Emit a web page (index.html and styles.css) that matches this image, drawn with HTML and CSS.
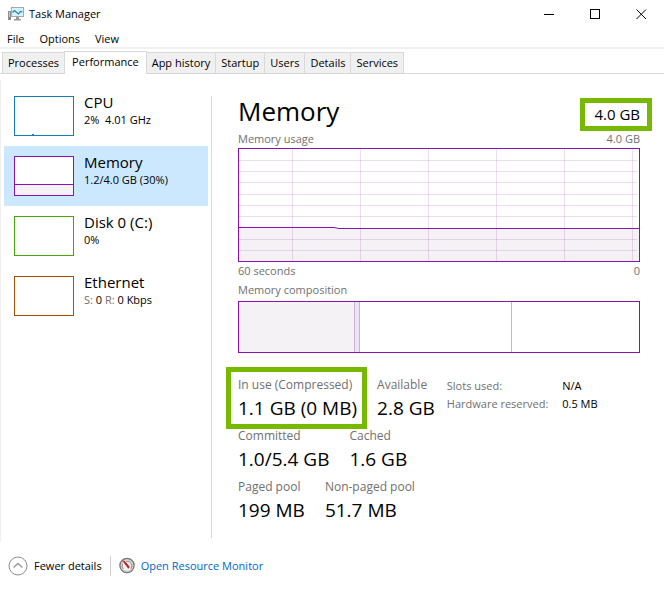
FILE: index.html
```html
<!DOCTYPE html>
<html lang="en">

<head>
    <meta charset="UTF-8">
    <meta name="viewport" content="width=device-width, initial-scale=1.0">
    <title>Task Manager</title>
    <link rel="stylesheet" href="styles.css">
</head>

<body>
    <header class="titlebar">
        <svg class="app-icon" width="16" height="16" viewBox="0 0 16 16" aria-hidden="true">
            <rect x="0.5" y="5.5" width="2" height="8" fill="#c8c8c8" stroke="#8f8f8f" />
            <rect x="1" y="11" width="1" height="2" fill="#5aa05a" />
            <rect x="3.5" y="1.5" width="12" height="9" fill="#d8f2fb" stroke="#a5a9ac" />
            <path d="M4.5 6.5 L6.5 4.500 L10.5 8 L12.5 5.500 L14.5 6" fill="none" stroke="#1286b8" stroke-width="1.2" />
            <path d="M8 11h3v2h2v1.500H6V13h2z" fill="#9a9a9a" />
        </svg>
        <h1 class="title">Task Manager</h1>
        <div class="window-buttons">
            <button type="button" aria-label="Minimize">
                <svg width="12" height="11" viewBox="0 0 12 11"><path d="M1 5.500h10" /></svg>
            </button>
            <button type="button" aria-label="Maximize">
                <svg width="11" height="11" viewBox="0 0 11 11"><path d="M0.500 0.500h9v9h-9z" /></svg>
            </button>
            <button type="button" aria-label="Close">
                <svg width="11" height="11" viewBox="0 0 11 11"><path class="smooth" d="M0.500 0.500l9.500 9.500M10 0.500l-9.500 9.500" /></svg>
            </button>
        </div>
    </header>

    <nav class="menu">
        <button type="button">File</button>
        <button type="button">Options</button>
        <button type="button">View</button>
    </nav>

    <div class="tabs" role="tablist">
        <button type="button" class="tab" role="tab">Processes</button>
        <button type="button" class="tab active" role="tab" aria-selected="true">Performance</button>
        <button type="button" class="tab" role="tab">App history</button>
        <button type="button" class="tab" role="tab">Startup</button>
        <button type="button" class="tab" role="tab">Users</button>
        <button type="button" class="tab" role="tab">Details</button>
        <button type="button" class="tab" role="tab">Services</button>
    </div>

    <main class="panel">
        <div class="sidebar">
            <button type="button" class="resource">
                <svg class="mini cpu" viewBox="0 0 58 38"><path d="M17 37.500h2" /></svg>
                <span class="resource-text">
                    <span class="resource-name">CPU</span>
                    <span class="resource-info">2%&nbsp; 4.01 GHz</span>
                </span>
            </button>
            <button type="button" class="resource selected">
                <svg class="mini memory" viewBox="0 0 58 38">
                    <rect x="0" y="27" width="58" height="11" />
                    <path d="M0 27.500h58" />
                </svg>
                <span class="resource-text">
                    <span class="resource-name">Memory</span>
                    <span class="resource-info">1.2/4.0 GB (30%)</span>
                </span>
            </button>
            <button type="button" class="resource">
                <svg class="mini disk" viewBox="0 0 58 38"></svg>
                <span class="resource-text">
                    <span class="resource-name">Disk 0 (C:)</span>
                    <span class="resource-info">0%</span>
                </span>
            </button>
            <button type="button" class="resource">
                <svg class="mini ethernet" viewBox="0 0 58 38"></svg>
                <span class="resource-text">
                    <span class="resource-name">Ethernet</span>
                    <span class="resource-info"><span class="dim">S:</span> 0 <span class="dim">R:</span> 0 Kbps</span>
                </span>
            </button>
        </div>

        <section class="details">
            <div class="heading">
                <h2>Memory</h2>
                <span class="total marked">4.0 GB</span>
            </div>

            <div class="caption"><span>Memory usage</span><span>4.0 GB</span></div>
            <svg class="chart usage" viewBox="0 0 400 112" preserveAspectRatio="none" role="img" aria-label="Memory usage">
                <path class="used" d="M0 78h95l5 1h300v33H0z" />
                <path class="grid" d="M0 11.500h398M0 22.500h398M0 33.500h398M0 45.500h398M0 56.500h398M0 67.500h398M0 90.500h398M0 101.500h398" />
                <path class="grid" d="M53.500 0v112M121.500 0v112M189.500 0v112M257.500 0v112M325.500 0v112M393.500 0v112" />
                <path class="line" d="M0 78.500h95l5 1h300" />
            </svg>
            <div class="caption below"><span>60 seconds</span><span>0</span></div>

            <div class="caption">Memory composition</div>
            <svg class="chart composition" viewBox="0 0 400 50" preserveAspectRatio="none" role="img" aria-label="Memory composition">
                <rect class="used" width="116" height="50" />
                <rect class="modified" x="116" width="5" height="50" />
                <path class="split" d="M115.500 0v50M120.500 0v50M272.500 0v50" />
            </svg>

            <div class="stats">
                <div class="counters">
                    <dl class="row">
                        <div class="marked wide"><dt>In use (Compressed)</dt><dd>1.1 GB (0 MB)</dd></div>
                        <div><dt>Available</dt><dd>2.8 GB</dd></div>
                    </dl>
                    <dl class="row">
                        <div><dt>Committed</dt><dd>1.0/5.4 GB</dd></div>
                        <div><dt>Cached</dt><dd>1.6 GB</dd></div>
                    </dl>
                    <dl class="row">
                        <div><dt>Paged pool</dt><dd>199 MB</dd></div>
                        <div><dt>Non-paged pool</dt><dd>51.7 MB</dd></div>
                    </dl>
                </div>
                <table class="hardware">
                    <tr><th scope="row">Slots used:</th><td>N/A</td></tr>
                    <tr><th scope="row">Hardware reserved:</th><td>0.5 MB</td></tr>
                </table>
            </div>
        </section>
    </main>

    <footer class="footer">
        <button type="button" class="fewer">
            <svg width="20" height="20" viewBox="0 0 20 20" aria-hidden="true">
                <circle cx="10" cy="10" r="9" fill="#fff" stroke="#8c8c8c" />
                <path d="M5.500 11.500L10 7.500l4.500 4" fill="none" stroke="#999" stroke-width="1.500" />
            </svg>
            Fewer details
        </button>
        <a href="#" class="monitor">
            <svg width="16" height="17" viewBox="0 0 17 17" aria-hidden="true">
                <circle cx="8.500" cy="8.500" r="7.500" fill="#f4f2ef" stroke="#777" stroke-width="1.500" />
                <circle cx="8.500" cy="8.500" r="6" fill="none" stroke="#c9c9c9" />
                <path d="M4.500 12a5 5 0 0 1-.5-5.500M7.500 4a5 5 0 0 1 5 8" fill="none" stroke="#8a8580" />
                <path d="M4 3.500l2.500 1L11 10l-1 1.500z" fill="#c4161c" stroke="#c4161c" stroke-width="0.800" />
            </svg>
            <span>Open Resource Monitor</span>
        </a>
    </footer>
</body>

</html>
```
FILE: styles.css
```css
* {
    box-sizing: border-box;
}

body {
    margin: 0;
    background-color: #fff;
    color: #000;
    font-family: "Open Sans", "Noto Sans", sans-serif;
    font-size: 11px;
    line-height: 16px;
}

button {
    border: none;
    padding: 0;
    background: none;
    color: inherit;
    font: inherit;
    white-space: nowrap;
}

/* title bar */
.titlebar {
    display: flex;
    align-items: center;
    height: 28px;
    padding-left: 8px;
}

.title {
    margin: 0 0 0 5px;
    font-size: 11px;
    font-weight: normal;
}

.window-buttons {
    display: flex;
    align-self: stretch;
    margin-left: auto;
}

.window-buttons button {
    display: flex;
    align-items: center;
    justify-content: center;
    width: 46px;
}

.window-buttons path {
    fill: none;
    stroke: #000;
    shape-rendering: crispEdges;
}

.window-buttons .smooth {
    shape-rendering: auto;
}

/* menu */
.menu {
    display: flex;
    gap: 15px;
    height: 21px;
    padding: 2px 0 0 7px;
    border-bottom: 2px solid #f0f0f0;
}

/* tabs */
.tabs {
    display: flex;
    align-items: flex-end;
    height: 25px;
    padding-left: 2px;
    border-bottom: 1px solid #d9d9d9;
}

.tab {
    height: 21px;
    padding: 0 5px;
    background-color: #f0f0f0;
    border: 1px solid #d9d9d9;
    border-width: 1px 1px 0 0;
}

.tab:first-child {
    border-left-width: 1px;
}

.tab.active {
    height: 23px;
    margin: 0 0 -1px -1px;
    padding: 0 7px 3px;
    border-left-width: 1px;
    background-color: #fff;
}

/* performance page */
.panel {
    display: flex;
    min-height: 462px;
    margin-top: 6px;
    border-left: 1px solid #f0f0f0;
}

.sidebar {
    flex: none;
    width: 207px;
    padding: 6px 0 0 3px;
}

.resource {
    display: flex;
    gap: 10px;
    width: 100%;
    height: 60px;
    padding: 6px 10px;
    text-align: left;
}

.resource.selected {
    background-color: #cce8ff;
}

.mini {
    flex: none;
    width: 60px;
    height: 40px;
    margin-top: 4px;
    border: 1px solid;
    background-color: #fff;
}

.mini path {
    fill: none;
    stroke: currentColor;
}

.mini rect {
    fill: #f4f2f4;
}

.cpu {
    color: #117dbb;
}

.memory {
    color: #8b12ae;
}

.disk {
    color: #4da60c;
}

.ethernet {
    color: #a74f01;
}

.resource-name,
.resource-info {
    display: block;
}

.resource-name {
    font-size: 15px;
    line-height: 20px;
}

.dim {
    color: #707070;
}

.details {
    flex: 1;
    margin: 16px 0 4px 3px;
    padding: 0 24px 0 26px;
    border-left: 1px solid #d9d9d9;
}

.heading {
    display: flex;
    justify-content: space-between;
    height: 35px;
}

.heading h2 {
    margin: 0;
    font-size: 26px;
    font-weight: normal;
    line-height: 30px;
}

.total {
    margin-top: 8px;
    font-size: 15px;
    line-height: 20px;
}

/* green frame round the key figures */
.marked {
    position: relative;
}

.marked::after {
    content: "";
    position: absolute;
    inset: -6px -12px 0 -14px;
    border: 5px solid #76b900;
}

.marked.wide::after {
    inset: -10px -10px -1px -12px;
}

.caption {
    display: flex;
    justify-content: space-between;
    height: 17px;
    color: #707070;
}

.caption.below {
    height: 20px;
    padding-top: 1px;
}

.chart {
    display: block;
    width: 100%;
    border: 1px solid #8b12ae;
}

.usage {
    height: 114px;
}

.composition {
    height: 52px;
    margin-top: 2px;
}

.chart path {
    fill: none;
    shape-rendering: crispEdges;
    vector-effect: non-scaling-stroke;
}

.chart .used {
    fill: #f4f2f4;
}

.chart .grid {
    stroke: #8b12ae;
    stroke-opacity: 0.15;
}

.chart .line {
    stroke: #8b12ae;
    shape-rendering: auto;
}

.chart .modified {
    fill: #ece4f0;
}

.chart .split {
    stroke: #c9b3d6;
}

.stats {
    display: flex;
    gap: 12px;
    margin-top: 24px;
}

.row {
    display: flex;
    gap: 20px;
    height: 51px;
    margin: 0;
    white-space: nowrap;
}

.row dt {
    color: #707070;
    font-size: 12px;
}

.row dd {
    margin: 0;
    font-size: 19px;
    line-height: 30px;
}

.hardware {
    align-self: flex-start;
    border-collapse: collapse;
    line-height: 18px;
    white-space: nowrap;
}

.hardware th {
    padding: 0 14px 0 0;
    color: #707070;
    font-weight: normal;
    text-align: left;
}

.hardware td {
    padding: 0;
}

/* footer */
.footer {
    display: flex;
    align-items: center;
    height: 47px;
    padding-left: 8px;
}

.fewer,
.monitor {
    display: flex;
    align-items: center;
    gap: 6px;
}

.fewer {
    padding-right: 8px;
    border-right: 1px solid #d0d0d0;
}

.monitor {
    margin-left: 8px;
    color: #0066cc;
    text-decoration: none;
}
```
